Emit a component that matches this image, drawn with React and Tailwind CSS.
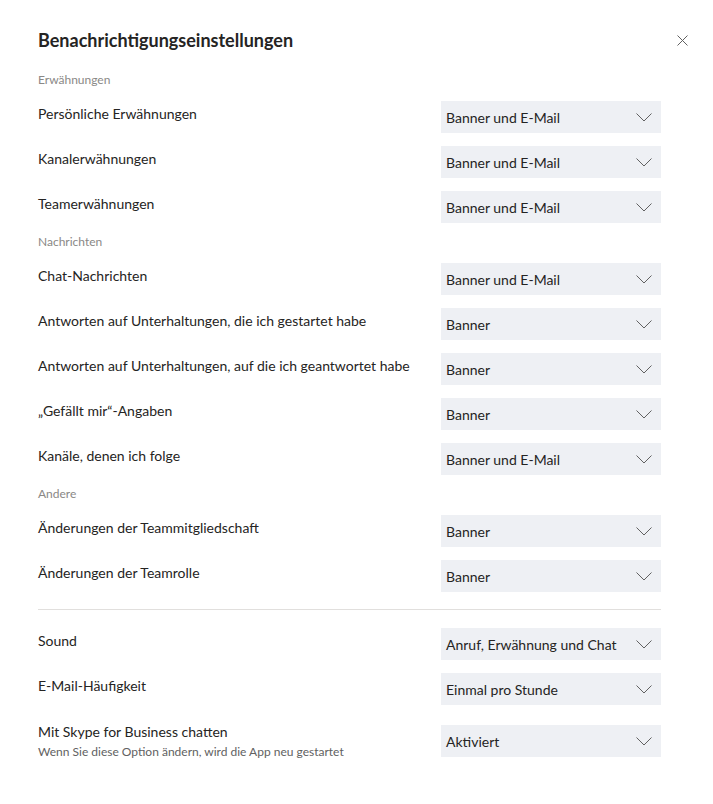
import React from "react";

const FONT = { fontFamily: "Lato, 'Segoe UI', 'Liberation Sans', sans-serif" };

const sections = [
  {
    title: "Erwähnungen",
    rows: [
      ["Persönliche Erwähnungen", "Banner und E-Mail"],
      ["Kanalerwähnungen", "Banner und E-Mail"],
      ["Teamerwähnungen", "Banner und E-Mail"],
    ],
  },
  {
    title: "Nachrichten",
    rows: [
      ["Chat-Nachrichten", "Banner und E-Mail"],
      ["Antworten auf Unterhaltungen, die ich gestartet habe", "Banner"],
      ["Antworten auf Unterhaltungen, auf die ich geantwortet habe", "Banner"],
      ["„Gefällt mir“-Angaben", "Banner"],
      ["Kanäle, denen ich folge", "Banner und E-Mail"],
    ],
  },
  {
    title: "Andere",
    rows: [
      ["Änderungen der Teammitgliedschaft", "Banner"],
      ["Änderungen der Teamrolle", "Banner"],
    ],
  },
];

const Chevron = () => (
  <svg width="16" height="9" viewBox="0 0 16 9" fill="none">
    <path d="M0.5 0.5 L8 8 L15.5 0.5" stroke="#616161" strokeWidth="1" />
  </svg>
);

const Select = ({ value }) => (
  <div className="flex h-[32px] w-[220px] shrink-0 items-center justify-between bg-[#eef0f4] pl-[5px] pr-[9px] text-[14px] text-[#252423]">
    <span>{value}</span>
    <Chevron />
  </div>
);

const Row = ({ label, value }) => (
  <div className="flex items-center justify-between">
    <span className="pb-[6px] text-[14px] leading-5 text-[#252423]">{label}</span>
    <Select value={value} />
  </div>
);

export default function App() {
  return (
    <div className="h-[804px] w-[713px] bg-white pl-[38px] pr-[52px] pt-[28px]" style={FONT}>
      <div className="flex items-center justify-between">
        <h1 className="text-[18px] font-bold leading-6 text-[#252423]">Benachrichtigungseinstellungen</h1>
        <svg width="11" height="11" viewBox="0 0 11 11" className="-mr-[27px]">
          <path d="M0.5 0.5 L10.5 10.5 M10.5 0.5 L0.5 10.5" stroke="#616161" strokeWidth="1" />
        </svg>
      </div>

      <div className="mt-[20px] flex flex-col">
        {sections.map((s, i) => (
          <div key={s.title} className={i > 0 ? "mt-[11px]" : ""}>
            <div className="text-[12px] leading-4 text-[#8a8886]">{s.title}</div>
            <div className="mt-[13px] flex flex-col gap-[13px]">
              {s.rows.map(([label, value]) => (
                <Row key={label} label={label} value={value} />
              ))}
            </div>
          </div>
        ))}
      </div>

      <div className="mt-[17px] h-px bg-[#e1dfdd]" />

      <div className="mt-[18px] flex flex-col gap-[13px]">
        <Row label="Sound" value="Anruf, Erwähnung und Chat" />
        <Row label="E-Mail-Häufigkeit" value="Einmal pro Stunde" />
      </div>
      <div className="mt-[17px] flex items-center justify-between">
        <div className="flex flex-col">
          <span className="text-[14px] leading-5 text-[#252423]">Mit Skype for Business chatten</span>
          <span className="mt-[2px] text-[12px] leading-4 text-[#616161]">
            Wenn Sie diese Option ändern, wird die App neu gestartet
          </span>
        </div>
        <Select value="Aktiviert" />
      </div>
    </div>
  );
}
